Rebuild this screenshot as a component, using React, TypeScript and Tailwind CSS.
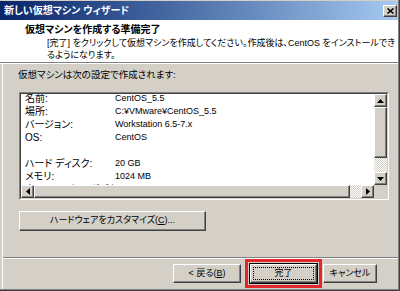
import React from 'react';

const font = "font-['Liberation_Sans','Noto_Sans_CJK_JP',sans-serif] [font-feature-settings:'palt']";
const raised =
  "border border-t-white border-l-white border-r-[#404040] border-b-[#404040] shadow-[inset_-1px_-1px_0_#808080] bg-[#d4d0c8]";
const dither =
  "[background-image:repeating-conic-gradient(#ffffff_0_25%,#d4d0c8_0_50%)] bg-[length:2px_2px]";

const settings = [
  { label: "名前:", value: "CentOS_5.5" },
  { label: "場所:", value: "C:¥VMware¥CentOS_5.5" },
  { label: "バージョン:", value: "Workstation 6.5-7.x" },
  { label: "OS:", value: "CentOS" },
  { label: "", value: "" },
  { label: "ハード ディスク:", value: "20 GB" },
  { label: "メモリ:", value: "1024 MB" },
  { label: "ネットワーク アダプタ:", value: "NAT" },
];

const Arrow = ({ dir }: { dir: 'up' | 'down' | 'left' | 'right' }) => {
  const pts = {
    up: "0,4 7,4 3.5,0",
    down: "0,0 7,0 3.5,4",
    left: "4,0 4,7 0,3.5",
    right: "0,0 0,7 4,3.5",
  }[dir];
  const vertical = dir === 'up' || dir === 'down';
  return (
    <svg width={vertical ? 7 : 4} height={vertical ? 4 : 7} viewBox={vertical ? "0 0 7 4" : "0 0 4 7"}>
      <polygon points={pts} fill="#000" />
    </svg>
  );
};

const ScrollButton = ({ dir }: { dir: 'up' | 'down' | 'left' | 'right' }) => (
  <div className={`${raised} w-[13px] h-[13px] flex items-center justify-center shrink-0`}>
    <Arrow dir={dir} />
  </div>
);

export default function App() {
  return (
    <div className={`${font} w-[400px] h-[291px] overflow-hidden border-r border-b border-[#404040] bg-[#d4d0c8]`}>
      <div className="h-full flex flex-col border-r border-b border-[#808080]">
        {/* title bar */}
        <div className="h-[20px] shrink-0 border-t border-[#d4d0c8] flex items-center justify-between pl-[4px] pr-[1px] bg-gradient-to-r from-[#0a246a] to-[#a6caf0]">
          <span className="text-white font-bold text-[10px] leading-[12px] whitespace-nowrap">新しい仮想マシン ウィザード</span>
          <div className={`${raised} w-[14px] h-[12px] flex items-center justify-center`}>
            <svg width="7" height="6" viewBox="0 0 7 6">
              <path d="M0.5 0.5 L6.5 5.5 M6.5 0.5 L0.5 5.5" stroke="#000" strokeWidth="1.6" />
            </svg>
          </div>
        </div>

        {/* header */}
        <div className="h-[42px] shrink-0 bg-white pt-[4px]">
          <div className="pl-[25px] text-[10px] font-bold leading-[12px] whitespace-nowrap text-black">
            仮想マシンを作成する準備完了
          </div>
          <div className="pl-[47px] mt-[1px] text-[9px] leading-[12px] whitespace-nowrap text-black">
            [完了] をクリックして仮想マシンを作成してください。作成後は、CentOS をインストールでき
            <br />
            るようになります。
          </div>
        </div>
        <div className="h-[2px] shrink-0 border-t border-[#808080] border-b border-b-white" />

        {/* body */}
        <div className="flex-1 ml-[2px] border-l border-white flex flex-col text-black">
          <div className="pl-[15px] pt-[5px] text-[9.5px] leading-[12px] whitespace-nowrap">
            仮想マシンは次の設定で作成されます:
          </div>

          <div className="ml-[16px] mt-[11px] w-[370px] h-[108px] border border-t-[#808080] border-l-[#808080] border-r-white border-b-white">
            <div className="h-full border border-t-[#404040] border-l-[#404040] border-r-[#d4d0c8] border-b-[#d4d0c8] grid grid-cols-[1fr_13px] grid-rows-[1fr_13px]">
              <div className="bg-white overflow-hidden pl-[4px]">
                <div className="-mt-[2px]">
                  {settings.map((s, i) => (
                    <div key={i} className="flex h-[13px] items-center whitespace-nowrap">
                      <span className="w-[90px] text-[10px] leading-[13px]">{s.label}</span>
                      <span className="text-[9px] leading-[13px]">{s.value}</span>
                    </div>
                  ))}
                </div>
              </div>
              <div className="flex flex-col">
                <ScrollButton dir="up" />
                <div className={`${raised} h-[51px] shrink-0`} />
                <div className={`flex-1 ${dither}`} />
                <ScrollButton dir="down" />
              </div>
              <div className="flex">
                <ScrollButton dir="left" />
                <div className={`${raised} w-[316px] shrink-0`} />
                <div className={`flex-1 ${dither}`} />
                <ScrollButton dir="right" />
              </div>
              <div className="bg-[#d4d0c8]" />
            </div>
          </div>

          <div className={`${raised} ml-[16px] mt-[11px] w-[187px] h-[20px] flex items-center justify-center text-[9px] whitespace-nowrap`}>
            ハードウェアをカスタマイズ(<span className="underline">C</span>)...
          </div>

          <div className="mt-[26px] h-[2px] border-t border-[#808080] border-b border-b-white" />

          <div className="mt-[4px] flex items-center pl-[170px] text-[9px] whitespace-nowrap">
            <div className={`${raised} w-[68px] h-[19px] flex items-center justify-center`}>
              &lt; 戻る(<span className="underline">B</span>)
            </div>
            <div className="ml-[8px] w-[69px] h-[21px] border border-black outline-3 outline-[#e3262b] outline-offset-[1px]">
              <div className={`${raised} h-full p-[2px] flex`}>
                <div className="flex-1 border border-dotted border-black flex items-center justify-center">
                  完了
                </div>
              </div>
            </div>
            <div className={`${raised} ml-[5px] w-[54px] h-[19px] flex items-center justify-center`}>
              キャンセル
            </div>
          </div>
        </div>
      </div>
    </div>
  );
}
